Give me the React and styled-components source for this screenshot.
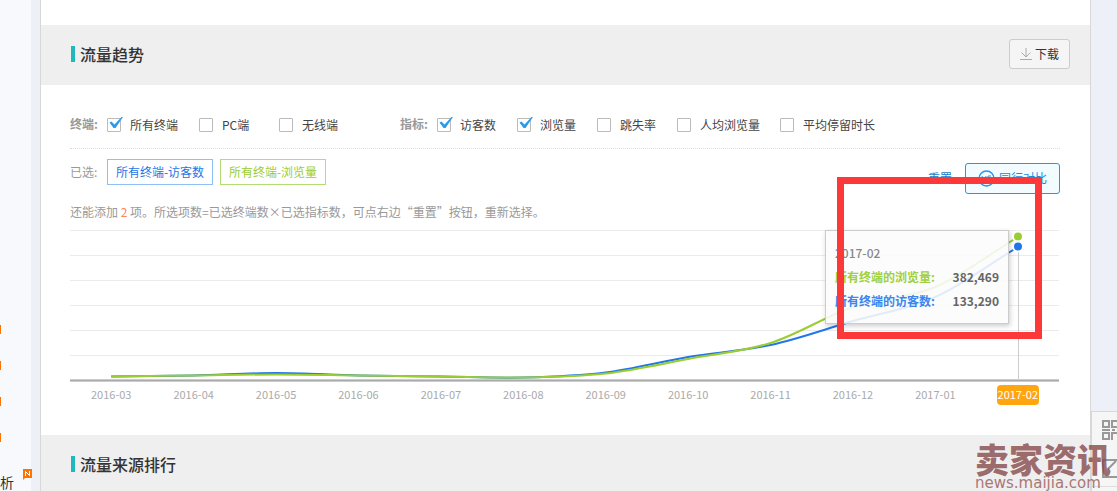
import { useState } from "react";
import styled, { createGlobalStyle } from "styled-components";

const GlobalStyle = createGlobalStyle`
  * {
    box-sizing: border-box;
  }

  body {
    margin: 0;
    overflow: hidden;
    background: #edf0f6;
    color: #444;
    font: 12px/18px "Noto Sans CJK SC", sans-serif;
  }

  button, input {
    font: inherit;
  }
`;

const Page = styled.div`
  position: relative;
  display: flex;
  height: 100vh;
  overflow: hidden;
`;

const Sidebar = styled.aside`
  position: relative;
  width: 31px;
  flex: none;
  display: flex;
  flex-direction: column;
  justify-content: flex-end;
  background: #f8f9fc;
`;

const Markers = styled.div`
  display: flex;
  flex-direction: column;
  gap: 27px;
`;

const Marker = styled.span`
  width: 1px;
  height: 9px;
  background: #ff7300;
`;

const SideLink = styled.a`
  display: block;
  margin-top: 32px;
  height: 17px;
  color: #333;
  font-size: 14px;
  line-height: 16px;
  text-decoration: none;
`;

const NewBadge = styled.svg`
  position: absolute;
  right: -1px;
  bottom: 11px;
`;

const Main = styled.main`
  flex: 1;
  min-width: 0;
  margin-left: 9px;
  padding-top: 25px;
  border: solid #d8d8d8;
  border-width: 0 1px;
  background: #fff;
`;

const SideRail = styled.div`
  width: 26px;
  flex: none;
  display: flex;
  align-items: flex-end;
`;

const ToolBox = styled.div`
  width: 26px;
  height: 80px;
  overflow: hidden;
  border: solid #d8d8d8;
  border-width: 1px 0 0 1px;
  background: #f6f6f6;
`;

const SectionHead = styled.header`
  display: flex;
  align-items: center;
  justify-content: space-between;
  height: 60px;
  padding: 0 20px 2px 30px;
  background: #efefef;
`;

const Title = styled.h2`
  margin: 0;
  padding-left: 5px;
  border-left: 4px solid #1fb8bd;
  color: #333;
  font-size: 16px;
  font-weight: 500;
  line-height: 16px;
`;

const DownloadButton = styled.button`
  display: flex;
  align-items: center;
  gap: 3px;
  height: 30px;
  padding: 0 10px;
  border: 1px solid #ccc;
  border-radius: 3px;
  background: #f5f5f5;
  color: #333;
`;

const Content = styled.div`
  height: 350px;
  padding: 30px 30px 0 29px;
`;

const Filters = styled.div`
  display: flex;
  height: 34px;
  border-bottom: 1px dotted #ddd;
`;

const Group = styled.fieldset`
  display: flex;
  align-items: flex-start;
  min-width: ${(props) => props.$width || 0}px;
  margin: 0;
  padding: 0;
  border: 0;
`;

const GroupName = styled.span`
  width: 37px;
  flex: none;
  color: #999;
  font-weight: ${(props) => (props.$bold ? 700 : 400)};
`;

const Option = styled.label`
  display: flex;
  align-items: center;
  gap: 9px;
  min-width: 80px;
  height: 20px;
  margin-right: ${(props) => props.$gap || 0}px;
  white-space: nowrap;
`;

const Checkbox = styled.input`
  appearance: none;
  width: 14px;
  height: 14px;
  flex: none;
  margin: 0;
  border: 1px solid #bbb;
  border-radius: 1px;
  background: #fff;
`;

const CheckWrap = styled.span`
  position: relative;
  display: flex;
`;

const Tick = styled.svg`
  position: absolute;
  left: 2px;
  top: -1px;
  pointer-events: none;
`;

const Selected = styled.div`
  display: flex;
  align-items: center;
  height: 46px;
`;

const Tag = styled.span`
  min-width: 106px;
  height: 26px;
  margin-right: 7px;
  border: 1px solid ${(props) => props.$border};
  color: ${(props) => props.$color};
  line-height: 24px;
  text-align: center;
`;

const Actions = styled.div`
  display: flex;
  align-items: center;
  gap: 13px;
  margin: 12px 0 0 auto;
`;

const ResetLink = styled.a`
  color: #1a7fc8;
  text-decoration: none;
`;

const CompareButton = styled.button`
  display: flex;
  align-items: center;
  gap: 4px;
  height: 31px;
  padding: 0 12px;
  border: 1px solid #2e93e0;
  border-radius: 3px;
  background: #f2fbff;
  color: #1a8be0;
`;

const Hint = styled.p`
  height: 18px;
  margin: 8px 0 9px;
  color: #999;

  & > b {
    color: #ff8a50;
    font-weight: 400;
  }
`;

const Chart = styled.div`
  position: relative;
  margin-right: 1px;
`;

const Plot = styled.svg`
  display: block;
  width: 100%;
  height: 152px;
  overflow: visible;

  & path {
    fill: none;
    vector-effect: non-scaling-stroke;
  }
`;

const Dots = styled.svg`
  position: absolute;
  top: 0;
  right: 33px;
  width: 16px;
  height: 28px;
`;

const Months = styled.div`
  display: grid;
  grid-template-columns: repeat(12, 1fr);
  justify-items: center;
  padding-top: 3px;
`;

const Month = styled.span`
  height: 20px;
  padding: 0 1px;
  border-radius: 4px;
  background: ${(props) => (props.$active ? "#ffa50f" : "none")};
  color: ${(props) => (props.$active ? "#fff" : "#aaa")};
  font-size: 11px;
  line-height: 19px;
`;

const Tooltip = styled.div`
  position: absolute;
  top: 0;
  right: 50px;
  width: 184px;
  height: 94px;
  padding: 10px 9px;
  border: 1px solid #ccc;
  background: rgba(252, 252, 252, 0.88);
  box-shadow: 1px 2px 5px rgba(0, 0, 0, 0.2);
  color: #888;
  font-weight: 500;
  line-height: 24px;
`;

const TipRow = styled.div`
  display: flex;
  justify-content: space-between;
  color: ${(props) => props.$color};
  font-weight: 700;

  & > span:last-child {
    color: #666;
  }
`;

const RedFrame = styled.div`
  position: absolute;
  top: -53px;
  right: 17px;
  width: 205px;
  height: 162px;
  border: 7px solid #fd3838;
  pointer-events: none;
`;

const Watermark = styled.div`
  position: absolute;
  right: 2px;
  bottom: 0;
  width: 140px;
  color: rgba(137, 78, 78, 0.82);
  font-size: 34px;
  font-weight: 900;
  line-height: 32px;
  white-space: nowrap;
  pointer-events: none;
`;

const Site = styled.div`
  color: #a87878;
  font: 15px/16px "DejaVu Sans", sans-serif;
`;

const TERMINALS = [
  { name: "所有终端", checked: true, gap: 12 },
  { name: "PC端" },
  { name: "无线端" },
];

const METRICS = [
  { name: "访客数", checked: true },
  { name: "浏览量", checked: true },
  { name: "跳失率" },
  { name: "人均浏览量", gap: 20 },
  { name: "平均停留时长" },
];

const MONTHS = [
  "2016-03", "2016-04", "2016-05", "2016-06", "2016-07", "2016-08",
  "2016-09", "2016-10", "2016-11", "2016-12", "2017-01", "2017-02",
];

const VIEWS = [146.5, 145.5, 144.5, 145.5, 146.5, 147.5, 143.5, 129, 113, 77, 57, 7];
const VISITORS = [146.5, 145.5, 143, 145.5, 146.5, 147.5, 142.5, 127, 115, 91, 67, 17];

// smooth curve through the monthly values, 12 even columns on 989 units
function curve(values) {
  const step = 989 / 12;
  const last = values.length - 1;
  const slope = (i) => {
    if (i === last) {
      return (values[last] - values[last - 1]) / 3;
    }
    return (values[i + 1] - values[Math.max(i - 1, 0)]) / 6;
  };
  return values
    .map((y, i) => {
      const x = step * (i + 0.5);
      if (i === 0) {
        return `M${x} ${y}`;
      }
      const c1 = `${x - (step * 2) / 3} ${values[i - 1] + slope(i - 1)}`;
      const c2 = `${x - step / 3} ${y - slope(i)}`;
      return `C${c1} ${c2} ${x} ${y}`;
    })
    .join("");
}

function CheckOption({ name, checked, gap }) {
  const [on, setOn] = useState(Boolean(checked));
  return (
    <Option $gap={gap}>
      <CheckWrap>
        <Checkbox
          type="checkbox"
          checked={on}
          onChange={(e) => setOn(e.target.checked)}
        />
        {on && (
          <Tick width="14" height="13" viewBox="0 0 14 13">
            <path d="M0.500 5.500L2.500 4.500 5.500 7.500 12.500 0H14L6.500 11H4.500z" fill="#2b9aea" />
          </Tick>
        )}
      </CheckWrap>
      {name}
    </Option>
  );
}

function TrendChart() {
  return (
    <Chart>
      <Plot viewBox="0 0 989 152" preserveAspectRatio="none">
        {[0, 25, 50, 75, 100, 125].map((y) => (
          <path key={y} d={`M0 ${y + 0.5}H989`} stroke="#ebebeb" />
        ))}
        <path d="M0 150.5H989" stroke="#ccc" strokeWidth="3" />
        <path d="M0 150.5H989" stroke="#aaa" />
        <path d="M948.5 17V150" stroke="#ccc" />
        <path d={curve(VISITORS)} stroke="#2277e8" strokeWidth="2" />
        <path d={curve(VIEWS)} stroke="#9acd32" strokeWidth="2" />
      </Plot>
      <Months>
        {MONTHS.map((month) => (
          <Month key={month} $active={month === "2017-02"}>
            {month}
          </Month>
        ))}
      </Months>
      <Tooltip>
        2017-02
        <TipRow $color="#9fd03f">
          <span>所有终端的浏览量:</span>
          <span>382,469</span>
        </TipRow>
        <TipRow $color="#3a85ee">
          <span>所有终端的访客数:</span>
          <span>133,290</span>
        </TipRow>
      </Tooltip>
      <Dots viewBox="0 0 16 28">
        <circle cx="8" cy="6.500" r="5" fill="#9acd32" stroke="#fff" strokeWidth="2" />
        <circle cx="8" cy="16.500" r="5" fill="#2277e8" stroke="#fff" strokeWidth="2" />
      </Dots>
      <RedFrame />
    </Chart>
  );
}

function App() {
  return (
    <Page>
      <GlobalStyle />
      <Sidebar>
        <Markers>
          <Marker />
          <Marker />
          <Marker />
          <Marker />
        </Markers>
        <SideLink href="#">析</SideLink>
        <NewBadge width="9" height="11" viewBox="0 0 9 11">
          <path d="M0 0h9v9H2l-2 2z" fill="#ff7300" />
          <path d="M2.500 7V2.500l4 4V2" fill="none" stroke="#fff" />
        </NewBadge>
      </Sidebar>
      <Main>
        <SectionHead>
          <Title>流量趋势</Title>
          <DownloadButton>
            <svg width="12" height="12" viewBox="0 0 12 12" fill="none" stroke="#aaa">
              <path d="M6 0v9M1.500 4.500L6 9l4.500-4.500M0 11.500h12" />
            </svg>
            下载
          </DownloadButton>
        </SectionHead>
        <Content>
          <Filters>
            <Group $width={330}>
              <GroupName $bold>终端:</GroupName>
              {TERMINALS.map((item) => (
                <CheckOption key={item.name} {...item} />
              ))}
            </Group>
            <Group>
              <GroupName $bold>指标:</GroupName>
              {METRICS.map((item) => (
                <CheckOption key={item.name} {...item} />
              ))}
            </Group>
          </Filters>
          <Selected>
            <GroupName>已选:</GroupName>
            <Tag $color="#1f74e8" $border="#8fc0f5">所有终端-访客数</Tag>
            <Tag $color="#9acd32" $border="#b5dc74">所有终端-浏览量</Tag>
            <Actions>
              <ResetLink href="#">重置</ResetLink>
              <CompareButton>
                <svg width="17" height="17" viewBox="0 0 17 17" fill="none" stroke="#2e93e0">
                  <circle cx="8.500" cy="8.500" r="7.500" strokeWidth="1.400" />
                  <path d="M4 6l2 5 2-5M13 6h-3v2.500h2.500V11H9.500" />
                </svg>
                同行对比
              </CompareButton>
            </Actions>
          </Selected>
          <Hint>
            还能添加 <b>2</b> 项。所选项数=已选终端数×已选指标数，可点右边“重置”按钮，重新选择。
          </Hint>
          <TrendChart />
        </Content>
        <SectionHead>
          <Title>流量来源排行</Title>
        </SectionHead>
      </Main>
      <SideRail>
        <ToolBox>
          <svg width="26" height="80" viewBox="0 0 26 80" fill="none" stroke="#999" strokeWidth="2">
            <path d="M11 9h6v6h-6zM11 21h6v6h-6zM20 9h6v6h-6zM10 18h8M20 18h3M20 28v-7h6" />
            <path d="M11 48h20v17H11zM15 58l9-9" />
            <path d="M0 74.500h26" stroke="#ddd" strokeWidth="1" />
          </svg>
        </ToolBox>
      </SideRail>
      <Watermark>
        卖家资讯
        <Site>news.maijia.com</Site>
      </Watermark>
    </Page>
  );
}

export default App;
